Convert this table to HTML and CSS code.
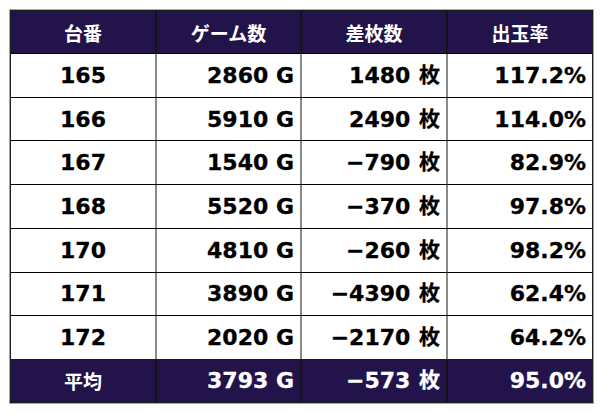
FILE: index.html
```html
<!DOCTYPE html>
<html lang="ja">
<head>
<meta charset="utf-8">
<title>台番データ</title>
<link rel="stylesheet" href="styles.css">
</head>
<body>
<div class="sheet">
  <div class="grid">
    <div class="row head">
      <div class="cell">台番</div>
      <div class="cell">ゲーム数</div>
      <div class="cell">差枚数</div>
      <div class="cell">出玉率</div>
    </div>
    <div class="row body">
      <div class="cell c">165</div>
      <div class="cell r">2860 G</div>
      <div class="cell r"><span>1480&nbsp;<span class="u">枚</span></span></div>
      <div class="cell r">117.2%</div>
    </div>
    <div class="row body">
      <div class="cell c">166</div>
      <div class="cell r">5910 G</div>
      <div class="cell r"><span>2490&nbsp;<span class="u">枚</span></span></div>
      <div class="cell r">114.0%</div>
    </div>
    <div class="row body">
      <div class="cell c">167</div>
      <div class="cell r">1540 G</div>
      <div class="cell r"><span>−790&nbsp;<span class="u">枚</span></span></div>
      <div class="cell r">82.9%</div>
    </div>
    <div class="row body">
      <div class="cell c">168</div>
      <div class="cell r">5520 G</div>
      <div class="cell r"><span>−370&nbsp;<span class="u">枚</span></span></div>
      <div class="cell r">97.8%</div>
    </div>
    <div class="row body">
      <div class="cell c">170</div>
      <div class="cell r">4810 G</div>
      <div class="cell r"><span>−260&nbsp;<span class="u">枚</span></span></div>
      <div class="cell r">98.2%</div>
    </div>
    <div class="row body">
      <div class="cell c">171</div>
      <div class="cell r">3890 G</div>
      <div class="cell r"><span>−4390&nbsp;<span class="u">枚</span></span></div>
      <div class="cell r">62.4%</div>
    </div>
    <div class="row body last">
      <div class="cell c">172</div>
      <div class="cell r">2020 G</div>
      <div class="cell r"><span>−2170&nbsp;<span class="u">枚</span></span></div>
      <div class="cell r">64.2%</div>
    </div>
    <div class="row foot">
      <div class="cell c jp">平均</div>
      <div class="cell r">3793 G</div>
      <div class="cell r"><span>−573&nbsp;<span class="u">枚</span></span></div>
      <div class="cell r">95.0%</div>
    </div>
  </div>
</div>
</body>
</html>
```
FILE: styles.css
```css
html, body {
  margin: 0;
  padding: 0;
  background: #ffffff;
}

body {
  padding: 9px 0 0 9px;
  font-family: "DejaVu Sans", "Noto Sans CJK JP", sans-serif;
}

.sheet {
  width: 585px;
  box-sizing: border-box;
  border: 1px solid #a6a6a6;
}

.grid {
  border: 1px solid #1c1c1c;
  display: flex;
  flex-direction: column;
}

.row {
  display: grid;
  grid-template-columns: 146px 145px 146px 1fr;
}

.cell {
  box-sizing: border-box;
  display: flex;
  align-items: center;
  font-weight: bold;
}

.cell:not(:last-child) {
  border-right: 2px solid #8a8a8a;
}

.head {
  height: 42px;
  background: #22134b;
  color: #ffffff;
  border-bottom: 1px solid #000000;
}

.head .cell {
  justify-content: center;
  font-family: "Noto Sans CJK JP", sans-serif;
  font-size: 19px;
}

.head .cell:not(:last-child),
.foot .cell:not(:last-child) {
  border-right-color: #141414;
}

.body {
  height: 43.71px;
  box-sizing: border-box;
  background: #ffffff;
  color: #000000;
  border-bottom: 1px solid #000000;
}

.body.last {
  border-bottom-color: #1a1a1a;
}

.foot {
  height: 42px;
  background: #22134b;
  color: #ffffff;
}

.c {
  justify-content: center;
  font-size: 22px;
  -webkit-text-stroke: 0.3px currentColor;
}

.r {
  justify-content: flex-end;
  padding-right: 6px;
  font-size: 22px;
  -webkit-text-stroke: 0.3px currentColor;
}

.u {
  font-family: "Noto Sans CJK JP", sans-serif;
  font-size: 21px;
  line-height: 0;
  margin-left: 1px;
  vertical-align: 1px;
}

.foot .jp {
  font-family: "Noto Sans CJK JP", sans-serif;
  font-size: 19px;
  -webkit-text-stroke: 0;
}
```
